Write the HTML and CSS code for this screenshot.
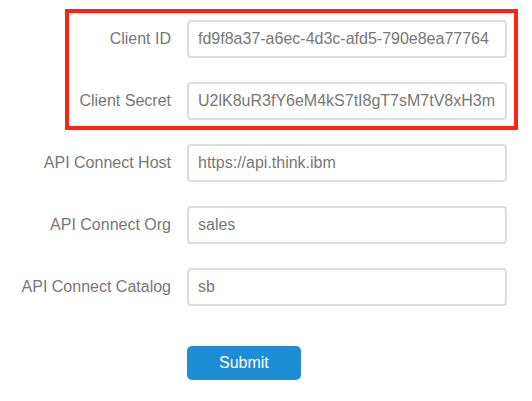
FILE: index.html
```html
<!DOCTYPE html>
<html lang="en">
<head>
<meta charset="utf-8">
<title>API Connect credentials</title>
<link rel="stylesheet" href="styles.css">
</head>
<body>
<form class="form">
  <div class="group highlighted">
    <div class="row">
      <label for="client-id">Client ID</label>
      <input id="client-id" type="text" value="fd9f8a37-a6ec-4d3c-afd5-790e8ea77764">
    </div>
    <div class="row">
      <label for="client-secret">Client Secret</label>
      <input id="client-secret" type="text" value="U2lK8uR3fY6eM4kS7tI8gT7sM7tV8xH3m">
    </div>
  </div>
  <div class="group">
    <div class="row">
      <label for="host">API Connect Host</label>
      <input id="host" type="text" value="https://api.think.ibm">
    </div>
    <div class="row">
      <label for="org">API Connect Org</label>
      <input id="org" type="text" value="sales">
    </div>
    <div class="row">
      <label for="catalog">API Connect Catalog</label>
      <input id="catalog" type="text" value="sb">
    </div>
  </div>
  <div class="actions">
    <button type="submit">Submit</button>
  </div>
</form>
</body>
</html>
```

FILE: styles.css
```css
* {
  box-sizing: border-box;
}

body {
  margin: 0;
  background: #fff;
  color: #777;
  font: 16px/20px "Liberation Sans", Arial, sans-serif;
}

.form,
.group {
  display: flex;
  flex-direction: column;
  gap: 24px;
}

.form {
  padding: 20px 25px 20px 0;
}

.row {
  display: grid;
  grid-template-columns: 171px 1fr;
  column-gap: 16px;
  align-items: center;
}

label {
  text-align: right;
}

input {
  width: 100%;
  min-width: 0;
  height: 38px;
  padding: 0 9px;
  border: 2px solid #ddd;
  border-radius: 4px;
  background: #fff;
  color: inherit;
  font: inherit;
}

/* Outline drawn over the two credential rows */
.highlighted {
  position: relative;
}

.highlighted::after {
  content: "";
  position: absolute;
  inset: -11px -11px -10px 65px;
  border: 4px solid #ff2312;
  pointer-events: none;
}

.actions {
  padding: 16px 0 0 187px;
}

button {
  display: block;
  height: 34px;
  padding: 0 32px;
  border: 0;
  border-radius: 5px;
  background: #1f8dd6;
  color: #fff;
  font: inherit;
}
```
